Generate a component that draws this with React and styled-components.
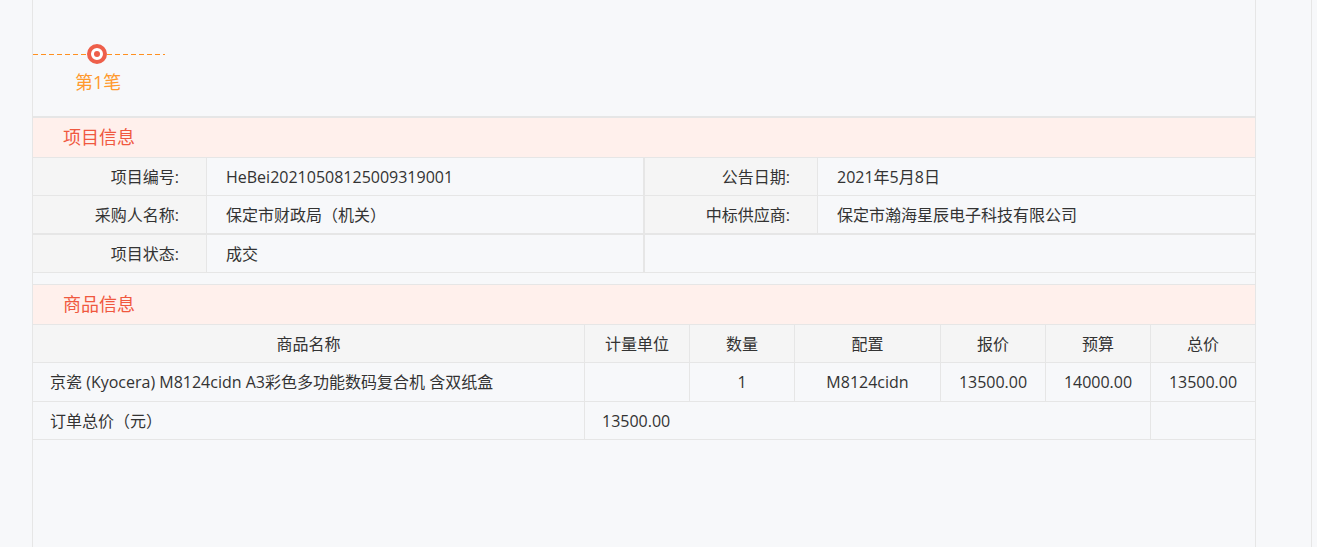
import React from 'react';
import styled, { createGlobalStyle } from 'styled-components';

const GlobalStyle = createGlobalStyle`
  html, body {
    margin: 0;
    padding: 0;
    background: #f7f8fa;
    overflow: hidden;
  }
  * {
    box-sizing: border-box;
  }
`;

const Page = styled.div`
  width: 1312px;
  height: 547px;
  padding-left: 32px;
  border-right: 1px solid #e6e6e6;
  overflow: hidden;
  font-family: 'Open Sans', 'Noto Sans CJK SC', sans-serif;
  font-size: 16px;
  color: #333;
`;

const Panel = styled.div`
  width: 1224px;
  height: 547px;
  border-left: 1px solid #e6e6e6;
  border-right: 1px solid #e6e6e6;
`;

const Steps = styled.div`
  height: 118px;
  padding-top: 44px;
  border-bottom: 2px solid #e6e6e6;
`;

const Step = styled.div`
  width: 132px;
  display: flex;
  flex-direction: column;
`;

const StepTrack = styled.div`
  display: flex;
  align-items: center;
  height: 20px;
`;

const StepLine = styled.span`
  display: block;
  height: 1px;
  width: ${p => p.$width}px;
  background: repeating-linear-gradient(to right, #ff9020 0 5px, transparent 5px 8px);
`;

const StepDot = styled.span`
  display: flex;
  align-items: center;
  justify-content: center;
  width: 20px;
  height: 20px;
  border-radius: 50%;
  border: 4px solid #ee5f4a;
  background: #fff;
  &::after {
    content: '';
    width: 6px;
    height: 6px;
    border-radius: 50%;
    background: #ee5f4a;
  }
`;

const StepLabel = styled.div`
  margin: 5px 0 0 42px;
  font-size: 18px;
  line-height: 26px;
  color: #ff9a2e;
`;

const SectionTitle = styled.div`
  height: 40px;
  padding-left: 30px;
  background: #fff0ec;
  border-bottom: 1px solid #e6e6e6;
  font-size: 18px;
  line-height: 39px;
  color: #f0583f;
  ${p => p.$boxed && `
    height: 41px;
    margin-top: 11px;
    border-top: 1px solid #e6e6e6;
  `}
`;

const Table = styled.table`
  width: 1222px;
  table-layout: fixed;
  border-collapse: separate;
  border-spacing: 0;
`;

const Row = styled.tr`
  height: ${p => p.$height || 38}px;
`;

const Cell = styled.td`
  padding: 0 0 0 ${p => p.$pad || 0}px;
  border-bottom: ${p => p.$heavy || 1}px solid #e6e6e6;
  border-right: ${p => (p.$last ? 0 : p.$split || 1)}px solid #e6e6e6;
  text-align: ${p => p.$align || 'left'};
  line-height: 20px;
  white-space: nowrap;
`;

const Label = styled(Cell)`
  padding-right: 27px;
  background: #f5f5f5;
  text-align: right;
`;

const Head = styled(Cell).attrs({ as: 'th' })`
  background: #f5f5f5;
  font-weight: 400;
  text-align: center;
`;

const infoRows = [
  ['项目编号:', 'HeBei20210508125009319001', '公告日期:', '2021年5月8日'],
  ['采购人名称:', '保定市财政局\uFF08机关\uFF09', '中标供应商:', '保定市瀚海星辰电子科技有限公司'],
];

const goodsColumns = [
  { title: '商品名称', width: 552 },
  { title: '计量单位', width: 105 },
  { title: '数量', width: 105 },
  { title: '配置', width: 146 },
  { title: '报价', width: 105 },
  { title: '预算', width: 105 },
  { title: '总价', width: 104 },
];

const InfoTable = () => (
  <Table>
    <colgroup>
      <col width="174" />
      <col width="438" />
      <col width="173" />
      <col width="437" />
    </colgroup>
    <tbody>
      {infoRows.map((row, index) => (
        <Row key={row[0]} $height={index === 1 ? 39 : 38}>
          <Label $heavy={index === 1 ? 2 : 1}>{row[0]}</Label>
          <Cell $pad={19} $split={2} $heavy={index === 1 ? 2 : 1}>{row[1]}</Cell>
          <Label $heavy={index === 1 ? 2 : 1}>{row[2]}</Label>
          <Cell $pad={19} $last $heavy={index === 1 ? 2 : 1}>{row[3]}</Cell>
        </Row>
      ))}
      <Row>
        <Label>项目状态:</Label>
        <Cell $pad={19} $split={2}>成交</Cell>
        <Cell colSpan={2} $last />
      </Row>
    </tbody>
  </Table>
);

const GoodsTable = () => (
  <Table>
    <colgroup>
      {goodsColumns.map(({ title, width }) => (
        <col key={title} width={width} />
      ))}
    </colgroup>
    <tbody>
      <Row>
        {goodsColumns.map(({ title }, index) => (
          <Head key={title} $last={index === goodsColumns.length - 1}>{title}</Head>
        ))}
      </Row>
      <Row $height={39}>
        <Cell $pad={17}>京瓷 (Kyocera) M8124cidn A3彩色多功能数码复合机 含双纸盒</Cell>
        <Cell />
        <Cell $align="center">1</Cell>
        <Cell $align="center">M8124cidn</Cell>
        <Cell $align="center">13500.00</Cell>
        <Cell $align="center">14000.00</Cell>
        <Cell $align="center" $last>13500.00</Cell>
      </Row>
      <Row>
        <Cell $pad={17}>{'订单总价\uFF08元\uFF09'}</Cell>
        <Cell colSpan={5} $pad={17}>13500.00</Cell>
        <Cell $last />
      </Row>
    </tbody>
  </Table>
);

const App = () => (
  <Page>
    <GlobalStyle />
    <Panel>
      <Steps>
        <Step>
          <StepTrack>
            <StepLine $width={54} />
            <StepDot />
            <StepLine $width={58} />
          </StepTrack>
          <StepLabel>第1笔</StepLabel>
        </Step>
      </Steps>
      <SectionTitle>项目信息</SectionTitle>
      <InfoTable />
      <SectionTitle $boxed>商品信息</SectionTitle>
      <GoodsTable />
    </Panel>
  </Page>
);

export default App;
